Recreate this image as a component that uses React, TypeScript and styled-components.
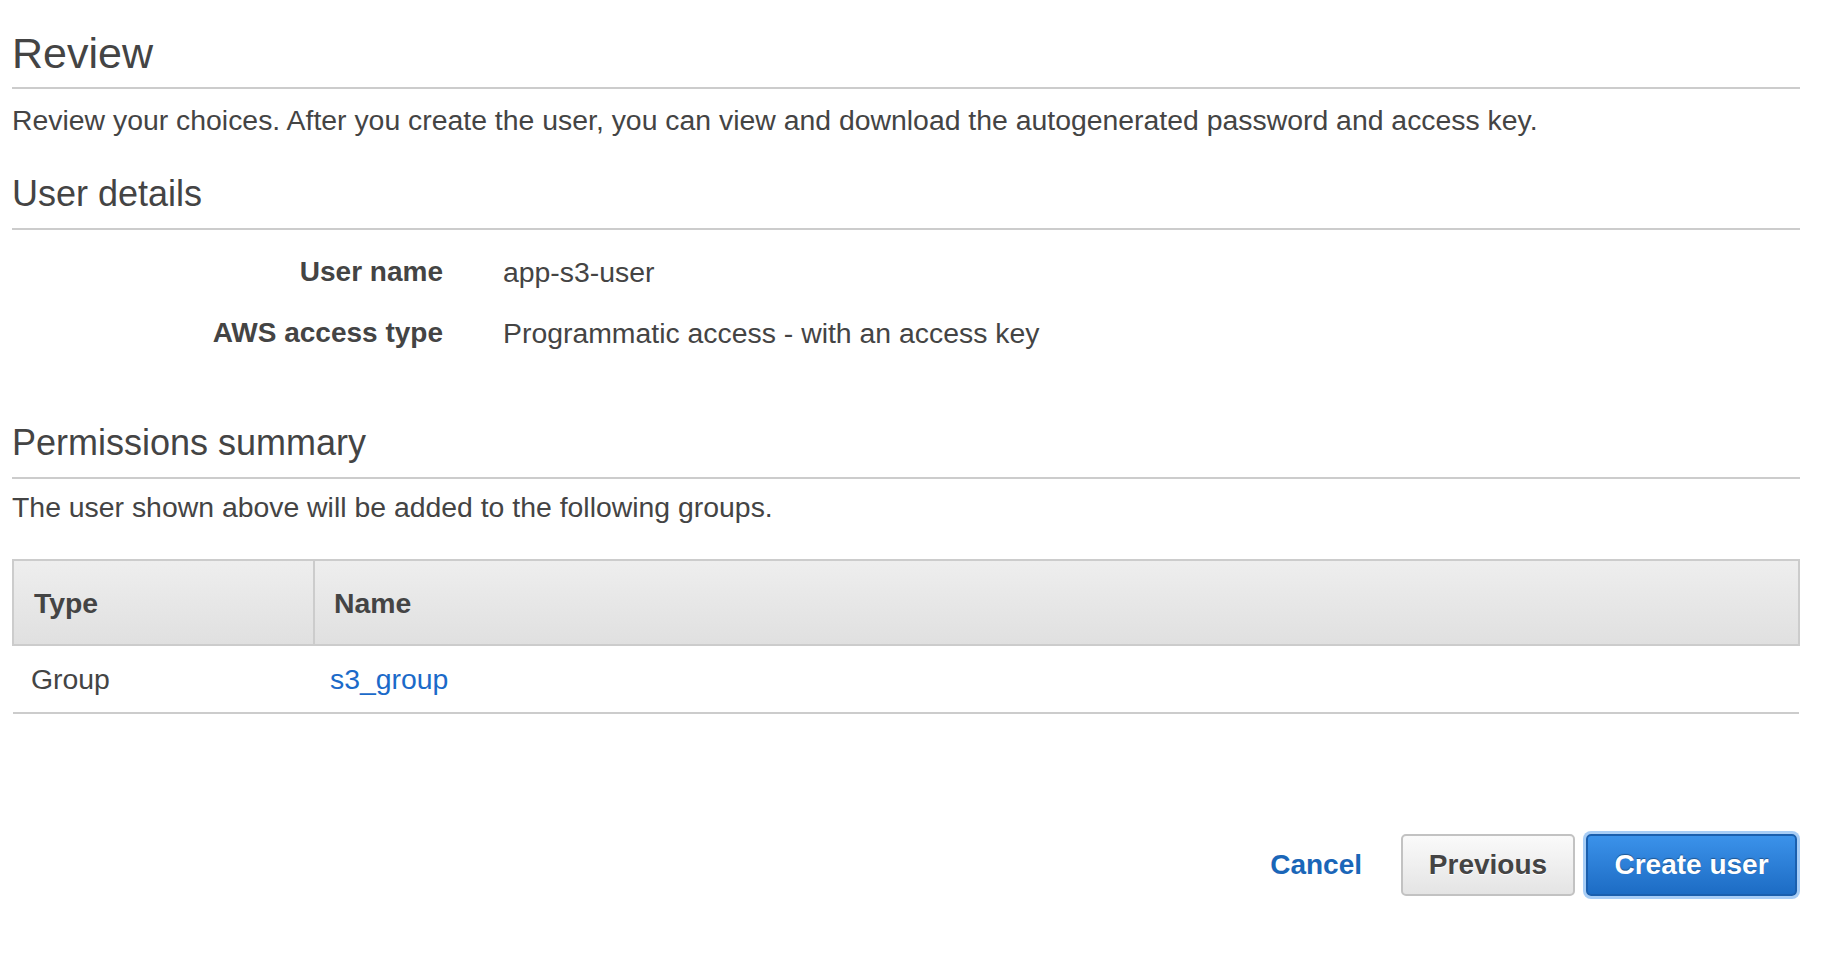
import styled, { createGlobalStyle } from "styled-components";

const GlobalStyle = createGlobalStyle`
  html, body {
    margin: 0;
    padding: 0;
    background: #ffffff;
  }
  body {
    font-family: "Liberation Sans", Arial, Helvetica, sans-serif;
    color: #444444;
  }
`;

interface DetailItem {
  label: string;
  value: string;
}

interface GroupItem {
  type: string;
  name: string;
}

const details: DetailItem[] = [
  { label: "User name", value: "app-s3-user" },
  { label: "AWS access type", value: "Programmatic access - with an access key" },
];

const groups: GroupItem[] = [{ type: "Group", name: "s3_group" }];

export default function App() {
  return (
    <>
      <GlobalStyle />
      <Page>
        <PageHeader>
          <Title>Review</Title>
        </PageHeader>
        <Intro>
          Review your choices. After you create the user, you can view and download the
          autogenerated password and access key.
        </Intro>

        <SectionHeader>
          <SectionTitle>User details</SectionTitle>
        </SectionHeader>
        <DetailList>
          {details.map((item) => (
            <DetailRow key={item.label}>
              <DetailLabel>{item.label}</DetailLabel>
              <DetailValue>{item.value}</DetailValue>
            </DetailRow>
          ))}
        </DetailList>

        <SectionHeader $spaced>
          <SectionTitle>Permissions summary</SectionTitle>
        </SectionHeader>
        <SectionText>The user shown above will be added to the following groups.</SectionText>

        <GroupTable>
          <thead>
            <tr>
              <HeadCell $first>Type</HeadCell>
              <HeadCell>Name</HeadCell>
            </tr>
          </thead>
          <tbody>
            {groups.map((g) => (
              <tr key={g.name}>
                <BodyCell $first>{g.type}</BodyCell>
                <BodyCell>
                  <GroupLink href="#">{g.name}</GroupLink>
                </BodyCell>
              </tr>
            ))}
          </tbody>
        </GroupTable>

        <Footer>
          <CancelLink href="#">Cancel</CancelLink>
          <SecondaryButton type="button">Previous</SecondaryButton>
          <PrimaryButton type="button">Create user</PrimaryButton>
        </Footer>
      </Page>
    </>
  );
}

const Page = styled.div`
  padding: 29px 44px 40px 12px;
  display: flex;
  flex-direction: column;
`;

const PageHeader = styled.div`
  padding-bottom: 10px;
  border-bottom: 2px solid #cccccc;
`;

const Title = styled.h1`
  margin: 0;
  font-size: 43px;
  line-height: 48px;
  font-weight: normal;
  color: #444444;
`;

const Intro = styled.p`
  margin: 15px 0 0;
  font-size: 28.4px;
  line-height: 32px;
  color: #444444;
`;

const SectionHeader = styled.div<{ $spaced?: boolean }>`
  margin-top: ${(p) => (p.$spaced ? "74px" : "38px")};
  padding-bottom: 14px;
  border-bottom: 2px solid #cccccc;
`;

const SectionTitle = styled.h2`
  margin: 0;
  font-size: 36px;
  line-height: 40px;
  font-weight: normal;
  color: #444444;
`;

const DetailList = styled.div`
  display: flex;
  flex-direction: column;
  gap: 29px;
  margin-top: 26px;
`;

const DetailRow = styled.div`
  display: grid;
  grid-template-columns: 431px 1fr;
  column-gap: 60px;
  font-size: 28.4px;
  line-height: 32px;
`;

const DetailLabel = styled.div`
  text-align: right;
  font-size: 28px;
  font-weight: bold;
  color: #444444;
`;

const DetailValue = styled.div`
  color: #444444;
`;

const SectionText = styled.p`
  margin: 12px 0 0;
  font-size: 28.4px;
  line-height: 32px;
  color: #444444;
`;

const GroupTable = styled.table`
  margin-top: 36px;
  width: 100%;
  border-collapse: collapse;
  font-size: 28.4px;
  line-height: 32px;
`;

const HeadCell = styled.th<{ $first?: boolean }>`
  height: 83px;
  padding: 0 ${(p) => (p.$first ? "20px" : "19px")};
  width: ${(p) => (p.$first ? "259px" : "auto")};
  text-align: left;
  font-weight: bold;
  color: #444444;
  background: linear-gradient(to bottom, #eeeeee, #e0e0e0);
  border: 2px solid #cccccc;
`;

const BodyCell = styled.td<{ $first?: boolean }>`
  height: 66px;
  padding: 0 ${(p) => (p.$first ? "18px" : "16px")};
  color: #444444;
  border-bottom: 2px solid #cccccc;
`;

const GroupLink = styled.a`
  color: #1b6ac9;
  text-decoration: none;
`;

const Footer = styled.div`
  display: flex;
  justify-content: flex-end;
  align-items: center;
  margin-top: 120px;
  padding-right: 3px;
`;

const CancelLink = styled.a`
  font-size: 28px;
  font-weight: bold;
  color: #1a66b8;
  text-decoration: none;
  margin-right: 39px;
`;

const Button = styled.button`
  height: 62px;
  font-family: "Liberation Sans", Arial, Helvetica, sans-serif;
  font-size: 28px;
  font-weight: bold;
  border-radius: 5px;
  cursor: pointer;
  box-sizing: border-box;
`;

const SecondaryButton = styled(Button)`
  width: 174px;
  color: #444444;
  background: linear-gradient(to bottom, #fafafa, #e4e4e4);
  border: 2px solid #c2c2c2;
  text-shadow: 0 1px 0 #ffffff;
  margin-right: 11px;
`;

const PrimaryButton = styled(Button)`
  width: 211px;
  color: #ffffff;
  background: linear-gradient(to bottom, #3b92ea, #1d6cc4);
  border: 2px solid #1a5fae;
  box-shadow: 0 0 0 3px #a7cdf6;
  text-shadow: 0 -1px 1px rgba(0, 0, 0, 0.35);
`;
